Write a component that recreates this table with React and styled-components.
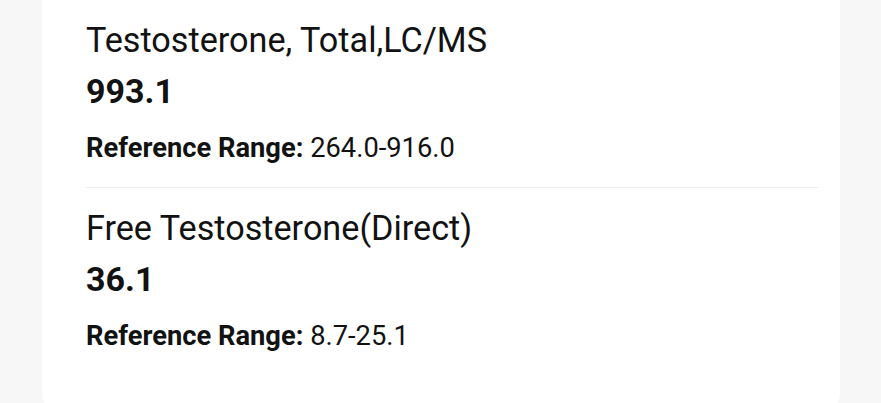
import React from "react";
import styled, { createGlobalStyle } from "styled-components";

const results = [
	{ name: "Testosterone, Total,LC/MS", value: "993.1", range: "264.0-916.0" },
	{ name: "Free Testosterone(Direct)", value: "36.1", range: "8.7-25.1" },
];

const App = () => {
	return (
		<>
			<GlobalStyle />
			<Page>
				<Card>
					{results.map((r, i) => (
						<ResultItem key={r.name} last={i === results.length - 1}>
							<TestName>{r.name}</TestName>
							<TestValue>{r.value}</TestValue>
							<RangeLine>
								<strong>Reference Range:</strong> {r.range}
							</RangeLine>
						</ResultItem>
					))}
				</Card>
			</Page>
		</>
	);
};

export default App;

const GlobalStyle = createGlobalStyle`
	html, body {
		margin: 0;
		padding: 0;
		background-color: #f7f7f7;
	}
	body {
		font-family: Roboto, "Liberation Sans", sans-serif;
		color: #121212;
	}
`;
const Page = styled.div`
	height: 403px;
	overflow: hidden;
	padding: 0 41px 0 42px;
`;
const Card = styled.div`
	background-color: #ffffff;
	border-radius: 0 0 22px 22px;
	padding: 0 22px 40px 44px;
`;
const ResultItem = styled.div`
	padding: 20px 0 23px 0;
	border-bottom: ${(p) => (p.last ? "none" : "1px solid #ececec")};
`;
const TestName = styled.div`
	font-size: 34.2px;
	line-height: 40px;
	font-weight: 400;
`;
const TestValue = styled.div`
	font-size: 34px;
	line-height: 44px;
	font-weight: 700;
	margin-top: 9px;
`;
const RangeLine = styled.div`
	font-size: 27.3px;
	line-height: 32px;
	margin-top: 19px;

	strong {
		font-weight: 700;
	}
`;
